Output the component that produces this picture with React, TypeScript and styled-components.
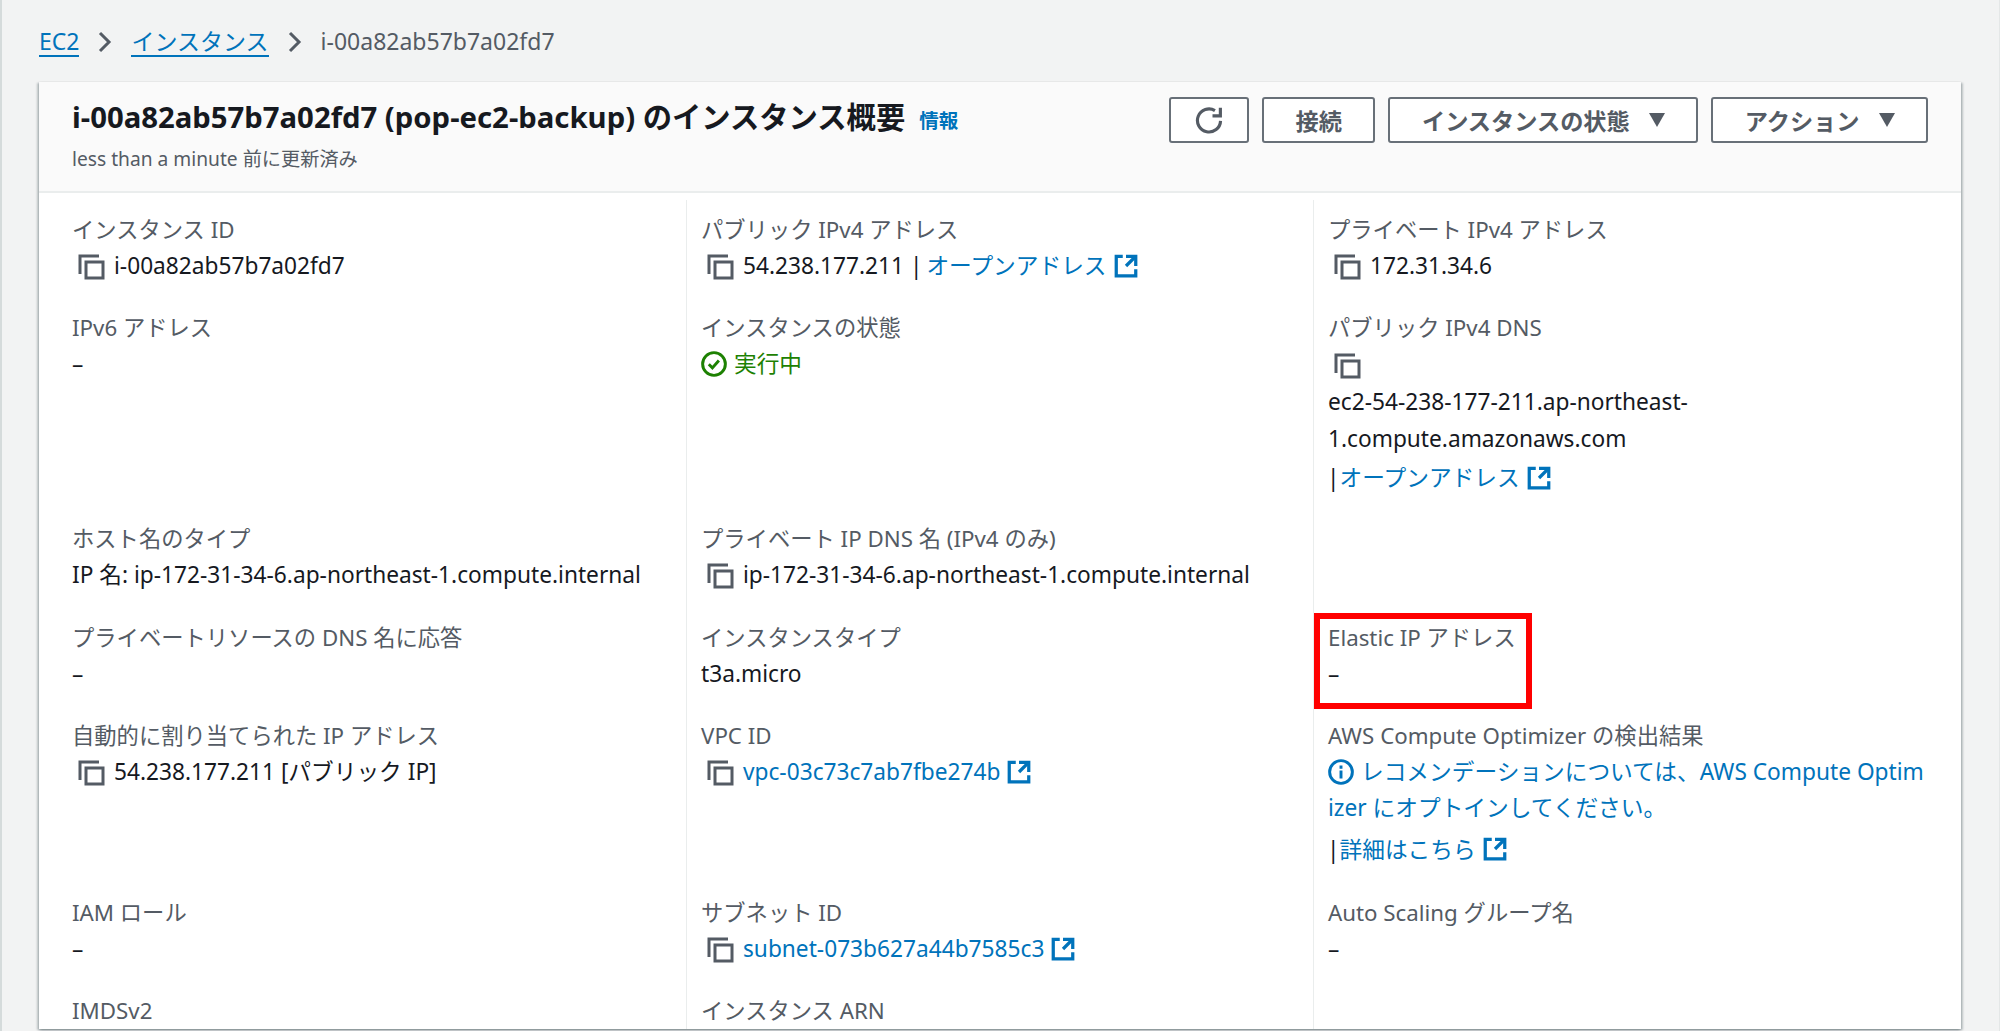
import styled, { createGlobalStyle } from "styled-components";

const GlobalStyle = createGlobalStyle`
    html, body {
        margin: 0;
        padding: 0;
        height: 100%;
        background: #f2f3f3;
    }
    body {
        font-family: "Noto Sans", "Noto Sans CJK JP", sans-serif;
        font-size: 22.7px;
        line-height: 35.2px;
        color: #16191f;
        overflow: hidden;
    }
`;

const Page = styled.div`
    height: 1031px;
    box-sizing: border-box;
    padding: 24px 0 0 37px;
    border-left: 2px solid #d5dbdb;
    border-right: 1px solid #e4e7e7;
`;

const Breadcrumbs = styled.nav`
    height: 35px;
    display: flex;
    align-items: center;
    margin-bottom: 23px;
    font-size: 23px;
    color: #545b64;
`;

const Crumb = styled.a`
    color: #0073bb;
    border-bottom: 2px solid #0073bb;
    line-height: 28px;
`;

const CrumbSep = styled.svg`
    width: 14px;
    height: 22px;
    margin: 0 19px 0 19px;
    fill: none;
    stroke: #545b64;
    stroke-width: 3;
`;

const Card = styled.section`
    height: 947px;
    width: 1922px;
    background: #fff;
    box-shadow: 0 1px 2px 0 rgba(0, 28, 36, 0.3), 2px 1px 2px 0 rgba(0, 28, 36, 0.2), -2px 1px 2px 0 rgba(0, 28, 36, 0.2);
`;

const CardHeader = styled.header`
    height: 111px;
    box-sizing: border-box;
    background: #fafafa;
    border-bottom: 2px solid #eaeded;
    padding: 15px 33px 0 33px;
    display: flex;
    justify-content: space-between;
`;

const TitleBlock = styled.div`
    display: flex;
    flex-direction: column;
`;

const TitleRow = styled.div`
    display: flex;
    align-items: baseline;
    gap: 14px;
`;

const Title = styled.h1`
    margin: 0;
    font-size: 29.3px;
    line-height: 40px;
    font-weight: 700;
    color: #16191f;
`;

const InfoLink = styled.a`
    font-size: 19.5px;
    font-weight: 700;
    color: #0073bb;
`;

const Updated = styled.div`
    margin-top: 7px;
    font-size: 19.2px;
    line-height: 28px;
    color: #545b64;
`;

const Actions = styled.div`
    display: flex;
    gap: 13px;
`;

const Button = styled.button`
    height: 46px;
    box-sizing: border-box;
    display: flex;
    align-items: center;
    padding: 0 31.5px;
    background: #fff;
    border: 2px solid #687078;
    border-radius: 3px;
    font-family: inherit;
    font-size: 23.2px;
    font-weight: 700;
    color: #545b64;
`;

const IconButton = styled(Button)`
    width: 80px;
    padding: 0;
    justify-content: center;
`;

const Caret = styled.svg`
    width: 16px;
    height: 14px;
    margin-left: 19px;
    fill: #545b64;
`;

const Grid = styled.div`
    display: grid;
    grid-template-columns: 614px 627px 1fr;
    grid-template-rows: 98px 211px 99px 98px 177px 98px 1fr;
    padding: 7px 0 0 33px;
    height: 836px;
    box-sizing: border-box;
`;

const Item = styled.div<{ $col: number }>`
    position: relative;
    grid-column: ${(p) => p.$col};
    padding: 12px 16px 0 ${(p) => (p.$col === 1 ? "0" : "14px")};
    border-left: ${(p) => (p.$col === 1 ? "none" : "1px solid #eaeded")};
    min-width: 0;
`;

const Label = styled.div`
    font-size: 22.3px;
    color: #545b64;
`;

const Value = styled.div`
    display: flex;
    align-items: center;
    margin-top: 1px;
    white-space: nowrap;
`;

const DnsCopyRow = styled(Value)`
    margin-top: 6px;
`;

const DnsName = styled.div`
    margin-top: 4px;
    line-height: 37px;
`;

const LinkRow = styled(Value)<{ $gap: number }>`
    margin-top: ${(p) => p.$gap}px;
`;

const Link = styled.a`
    color: #0073bb;
`;

const WrappedLink = styled(Link)`
    display: block;
    margin-top: 1px;
`;

const CopyIcon = styled.svg`
    width: 28px;
    height: 28px;
    margin: 0 9px 0 5px;
    flex: none;
    fill: none;
    stroke: #545b64;
    stroke-width: 3;
`;

const ExternalIcon = styled.svg`
    width: 26px;
    height: 26px;
    margin-left: 6px;
    flex: none;
    fill: none;
    stroke: #0073bb;
    stroke-width: 2;
`;

const StatusIcon = styled.svg<{ $color: string }>`
    width: 26px;
    height: 26px;
    margin-right: 7px;
    flex: none;
    fill: none;
    stroke: ${(p) => p.$color};
    stroke-width: 1.8;
`;

const Running = styled.span`
    color: #1d8102;
`;

const Separator = styled.span`
    margin-right: 4px;
`;

const RowSeparator = styled.span`
    margin-left: -1px;
    margin-right: 0;
`;

const Highlight = styled.div`
    position: absolute;
    left: 0;
    top: 5px;
    width: 218px;
    height: 96px;
    box-sizing: border-box;
    border: 6px solid #ff0000;
`;

const Copy = () => (
    <CopyIcon viewBox="0 0 28 28">
        <path d="M3 22V4h19" />
        <rect x="9" y="10" width="17" height="16" />
    </CopyIcon>
);

const External = () => (
    <ExternalIcon viewBox="0 0 16 16">
        <path d="M14 8V2H8" />
        <path d="M14 2 8 8" />
        <path d="M6 2H2v12h12v-4" />
    </ExternalIcon>
);

const Chevron = () => (
    <CrumbSep viewBox="0 0 14 22">
        <path d="M2 2l9 9-9 9" />
    </CrumbSep>
);

const Down = () => (
    <Caret viewBox="0 0 16 14">
        <path d="M0 0h16L8 14z" />
    </Caret>
);

export default function App() {
    return (
        <>
            <GlobalStyle />
            <Page>
                <Breadcrumbs>
                    <Crumb>EC2</Crumb>
                    <Chevron />
                    <Crumb>インスタンス</Crumb>
                    <Chevron />
                    <span>i-00a82ab57b7a02fd7</span>
                </Breadcrumbs>
                <Card>
                    <CardHeader>
                        <TitleBlock>
                            <TitleRow>
                                <Title>i-00a82ab57b7a02fd7 (pop-ec2-backup) のインスタンス概要</Title>
                                <InfoLink>情報</InfoLink>
                            </TitleRow>
                            <Updated>less than a minute 前に更新済み</Updated>
                        </TitleBlock>
                        <Actions>
                            <IconButton aria-label="refresh">
                                <svg width="28" height="28" viewBox="0 0 16 16" fill="none" stroke="#545b64" strokeWidth="1.8">
                                    <path d="M14.6 8.5A6.6 6.6 0 1 1 11.4 2.6" />
                                    <path d="M14.5 1v4.6H10" />
                                </svg>
                            </IconButton>
                            <Button>接続</Button>
                            <Button>インスタンスの状態<Down /></Button>
                            <Button>アクション<Down /></Button>
                        </Actions>
                    </CardHeader>
                    <Grid>
                        <Item $col={1}>
                            <Label>インスタンス ID</Label>
                            <Value><Copy />i-00a82ab57b7a02fd7</Value>
                        </Item>
                        <Item $col={2}>
                            <Label>パブリック IPv4 アドレス</Label>
                            <Value><Copy />54.238.177.211&nbsp;<Separator>|</Separator><Link>オープンアドレス</Link><External /></Value>
                        </Item>
                        <Item $col={3}>
                            <Label>プライベート IPv4 アドレス</Label>
                            <Value><Copy />172.31.34.6</Value>
                        </Item>

                        <Item $col={1}>
                            <Label>IPv6 アドレス</Label>
                            <Value>–</Value>
                        </Item>
                        <Item $col={2}>
                            <Label>インスタンスの状態</Label>
                            <Value>
                                <StatusIcon $color="#1d8102" viewBox="0 0 16 16">
                                    <circle cx="8" cy="8" r="7" />
                                    <path d="M4.8 8.2l2.2 2.2 4-4.6" />
                                </StatusIcon>
                                <Running>実行中</Running>
                            </Value>
                        </Item>
                        <Item $col={3}>
                            <Label>パブリック IPv4 DNS</Label>
                            <DnsCopyRow><Copy /></DnsCopyRow>
                            <DnsName>ec2-54-238-177-211.ap-northeast-<br />1.compute.amazonaws.com</DnsName>
                            <LinkRow $gap={3}><RowSeparator>|</RowSeparator><Link>オープンアドレス</Link><External /></LinkRow>
                        </Item>

                        <Item $col={1}>
                            <Label>ホスト名のタイプ</Label>
                            <Value>IP 名: ip-172-31-34-6.ap-northeast-1.compute.internal</Value>
                        </Item>
                        <Item $col={2}>
                            <Label>プライベート IP DNS 名 (IPv4 のみ)</Label>
                            <Value><Copy />ip-172-31-34-6.ap-northeast-1.compute.internal</Value>
                        </Item>
                        <Item $col={3} />

                        <Item $col={1}>
                            <Label>プライベートリソースの DNS 名に応答</Label>
                            <Value>–</Value>
                        </Item>
                        <Item $col={2}>
                            <Label>インスタンスタイプ</Label>
                            <Value>t3a.micro</Value>
                        </Item>
                        <Item $col={3}>
                            <Highlight />
                            <Label>Elastic IP アドレス</Label>
                            <Value>–</Value>
                        </Item>

                        <Item $col={1}>
                            <Label>自動的に割り当てられた IP アドレス</Label>
                            <Value><Copy />54.238.177.211 [パブリック IP]</Value>
                        </Item>
                        <Item $col={2}>
                            <Label>VPC ID</Label>
                            <Value><Copy /><Link>vpc-03c73c7ab7fbe274b</Link><External /></Value>
                        </Item>
                        <Item $col={3}>
                            <Label>AWS Compute Optimizer の検出結果</Label>
                            <Value>
                                <StatusIcon $color="#0073bb" viewBox="0 0 16 16">
                                    <circle cx="8" cy="8" r="7" />
                                    <path d="M8 7v5M8 4v2" />
                                </StatusIcon>
                                <Link>レコメンデーションについては、AWS Compute Optim</Link>
                            </Value>
                            <WrappedLink>izer にオプトインしてください。</WrappedLink>
                            <LinkRow $gap={6}><RowSeparator>|</RowSeparator><Link>詳細はこちら</Link><External /></LinkRow>
                        </Item>

                        <Item $col={1}>
                            <Label>IAM ロール</Label>
                            <Value>–</Value>
                        </Item>
                        <Item $col={2}>
                            <Label>サブネット ID</Label>
                            <Value><Copy /><Link>subnet-073b627a44b7585c3</Link><External /></Value>
                        </Item>
                        <Item $col={3}>
                            <Label>Auto Scaling グループ名</Label>
                            <Value>–</Value>
                        </Item>

                        <Item $col={1}>
                            <Label>IMDSv2</Label>
                        </Item>
                        <Item $col={2}>
                            <Label>インスタンス ARN</Label>
                        </Item>
                        <Item $col={3} />
                    </Grid>
                </Card>
            </Page>
        </>
    );
}
